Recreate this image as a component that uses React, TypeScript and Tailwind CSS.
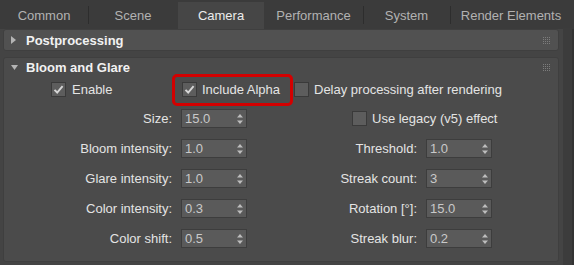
import type { ReactNode } from "react";

const tabs = [
  { nome: "Common", largura: "w-[88px]" },
  { nome: "Scene", largura: "w-[90px]" },
  { nome: "Camera", largura: "w-[86px]" },
  { nome: "Performance", largura: "w-[99px]" },
  { nome: "System", largura: "w-[87px]" },
  { nome: "Render Elements", largura: "w-[122px]" },
];

function Grip() {
  const dots = [];
  for (let r = 0; r < 4; r++)
    for (let c = 0; c < 4; c++)
      dots.push(<rect key={`${r}-${c}`} x={c * 2} y={r * 2} width="1" height="1" fill="#7c7c7c" />);
  return (
    <svg width="7" height="7" viewBox="0 0 7 7">
      {dots}
    </svg>
  );
}

function Caixa({ marcada }: { marcada?: boolean }) {
  return (
    <span className="flex h-[15px] w-[15px] shrink-0 items-center justify-center border border-[#3a3a3a] bg-[#5d5d5d]">
      {marcada && (
        <svg width="11" height="11" viewBox="0 0 11 11">
          <path d="M1.5 5.8 L4.2 8.5 L9.6 2.2" fill="none" stroke="#d6d6d6" strokeWidth="1.9" />
        </svg>
      )}
    </span>
  );
}

function Spinner({ valor }: { valor: string }) {
  return (
    <div className="flex h-[19px] w-[66px] shrink-0 items-center justify-between border border-[#3d3d3d] bg-[#5a5a5a] pl-[3px] pr-[3px]">
      <span className="text-[13px] leading-none text-[#c9c9c9]">{valor}</span>
      <svg width="6" height="10" viewBox="0 0 6 10">
        <polygon points="0,3.5 3,0 6,3.5" fill="#bdbdbd" />
        <polygon points="0,6.5 6,6.5 3,10" fill="#bdbdbd" />
      </svg>
    </div>
  );
}

function Campo({ rotulo, valor, largura }: { rotulo: string; valor: string; largura: string }) {
  return (
    <div className="flex items-center">
      <span className={`${largura} pr-[9px] text-right text-[13px] leading-none text-[#e4e4e4]`}>{rotulo}</span>
      <Spinner valor={valor} />
    </div>
  );
}

function Linha({ children, topo }: { children: ReactNode; topo: string }) {
  return <div className={`flex h-[19px] items-center ${topo}`}>{children}</div>;
}

export default function App() {
  const linhas = [
    ["Bloom intensity:", "1.0", "Threshold:", "1.0"],
    ["Glare intensity:", "1.0", "Streak count:", "3"],
    ["Color intensity:", "0.3", "Rotation [°]:", "15.0"],
    ["Color shift:", "0.5", "Streak blur:", "0.2"],
  ];

  return (
    <div
      className="flex h-[265px] w-[574px] flex-col overflow-hidden bg-[#444444] text-[13px]"
      style={{ fontFamily: '"Liberation Sans", Arial, sans-serif' }}
    >
      <div className="flex h-[29px] items-stretch bg-[#3b3b3b]">
        {tabs.map((t, i) => {
          const ativa = t.nome === "Camera";
          const separador = i > 0 && tabs[i - 1].nome !== "Camera" && !ativa;
          return (
            <div key={t.nome} className={`relative flex ${t.largura} items-end`}>
              {separador && <span className="absolute left-0 top-[6px] h-[18px] w-px bg-[#2d2d2d]" />}
              <div
                className={`flex h-[27px] w-full items-center justify-center ${
                  ativa ? "bg-[#464646] text-[#ececec]" : "text-[#b2b2b2]"
                }`}
              >
                {t.nome}
              </div>
            </div>
          );
        })}
      </div>

      <div className="flex flex-1">
        <div className="flex w-[559px] flex-col gap-[6px] pl-[3px]">
          <div className="flex h-[22px] items-center justify-between rounded-[3px] border border-[#3f3f3f] bg-[#515151] pr-[8px]">
            <div className="flex items-center">
              <svg className="ml-[7px]" width="5" height="8" viewBox="0 0 5 8">
                <polygon points="0,0 5,4 0,8" fill="#b4b4b4" />
              </svg>
              <span className="ml-[10px] font-bold leading-none text-[#f2f2f2]">Postprocessing</span>
            </div>
            <Grip />
          </div>

          <div className="flex h-[205px] flex-col rounded-[3px] border border-[#3f3f3f] bg-[#4b4b4b]">
            <div className="flex h-[19px] items-center justify-between pr-[8px]">
              <div className="flex items-center">
                <svg className="ml-[7px]" width="7" height="5" viewBox="0 0 7 5">
                  <polygon points="0,0 7,0 3.5,5" fill="#b4b4b4" />
                </svg>
                <span className="ml-[8px] font-bold leading-none text-[#f2f2f2]">Bloom and Glare</span>
              </div>
              <Grip />
            </div>

            <Linha topo="mt-[3px]">
              <div className="ml-[47px] flex w-[131px] items-center gap-[6px]">
                <Caixa marcada />
                <span className="leading-none text-[#e4e4e4]">Enable</span>
              </div>
              <div className="relative flex w-[112px] items-center gap-[5px]">
                <span className="pointer-events-none absolute -left-[10px] -top-[8px] -bottom-[9px] right-[1px] rounded-[5px] border-[3px] border-[#d30000]" />
                <Caixa marcada />
                <span className="leading-none text-[#e4e4e4]">Include Alpha</span>
              </div>
              <div className="flex items-center gap-[5px]">
                <Caixa />
                <span className="leading-none text-[#e4e4e4]">Delay processing after rendering</span>
              </div>
            </Linha>

            <Linha topo="mt-[10px]">
              <Campo rotulo="Size:" valor="15.0" largura="w-[177px]" />
              <div className="ml-[105px] flex items-center gap-[5px]">
                <Caixa />
                <span className="leading-none text-[#e4e4e4]">Use legacy (v5) effect</span>
              </div>
            </Linha>

            {linhas.map(([a, va, b, vb]) => (
              <Linha key={a} topo="mt-[11px]">
                <Campo rotulo={a} valor={va} largura="w-[177px]" />
                <Campo rotulo={b} valor={vb} largura="w-[179px]" />
              </Linha>
            ))}
          </div>
        </div>
        <div className="w-[4px]" />
        <div className="-mt-px w-[9px] bg-[#3c3c3c]" />
        <div className="flex-1 bg-[#333333]" />
      </div>
    </div>
  );
}
